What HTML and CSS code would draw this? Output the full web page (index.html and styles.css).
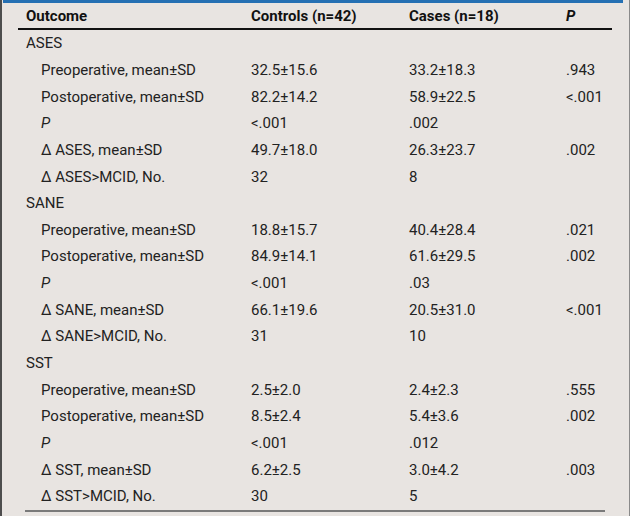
FILE: index.html
```html
<!DOCTYPE html>
<html>
<head>
<meta charset="utf-8">
<link rel="stylesheet" href="styles.css">
</head>
<body>
<div class="frame">
  <div class="topbar"></div>
  <table class="data">
    <colgroup>
      <col class="c1"><col class="c2"><col class="c3"><col class="c4">
    </colgroup>
    <thead>
      <tr><th>Outcome</th><th>Controls (n=42)</th><th>Cases (n=18)</th><th><i>P</i></th></tr>
    </thead>
    <tbody>
      <tr><td class="grp">ASES</td><td></td><td></td><td></td></tr>
      <tr><td class="sub">Preoperative, mean±SD</td><td>32.5±15.6</td><td>33.2±18.3</td><td>.943</td></tr>
      <tr><td class="sub">Postoperative, mean±SD</td><td>82.2±14.2</td><td>58.9±22.5</td><td>&lt;.001</td></tr>
      <tr><td class="sub"><i>P</i></td><td>&lt;.001</td><td>.002</td><td></td></tr>
      <tr><td class="sub">Δ ASES, mean±SD</td><td>49.7±18.0</td><td>26.3±23.7</td><td>.002</td></tr>
      <tr><td class="sub">Δ ASES&gt;MCID, No.</td><td>32</td><td>8</td><td></td></tr>
      <tr><td class="grp">SANE</td><td></td><td></td><td></td></tr>
      <tr><td class="sub">Preoperative, mean±SD</td><td>18.8±15.7</td><td>40.4±28.4</td><td>.021</td></tr>
      <tr><td class="sub">Postoperative, mean±SD</td><td>84.9±14.1</td><td>61.6±29.5</td><td>.002</td></tr>
      <tr><td class="sub"><i>P</i></td><td>&lt;.001</td><td>.03</td><td></td></tr>
      <tr><td class="sub">Δ SANE, mean±SD</td><td>66.1±19.6</td><td>20.5±31.0</td><td>&lt;.001</td></tr>
      <tr><td class="sub">Δ SANE&gt;MCID, No.</td><td>31</td><td>10</td><td></td></tr>
      <tr><td class="grp">SST</td><td></td><td></td><td></td></tr>
      <tr><td class="sub">Preoperative, mean±SD</td><td>2.5±2.0</td><td>2.4±2.3</td><td>.555</td></tr>
      <tr><td class="sub">Postoperative, mean±SD</td><td>8.5±2.4</td><td>5.4±3.6</td><td>.002</td></tr>
      <tr><td class="sub"><i>P</i></td><td>&lt;.001</td><td>.012</td><td></td></tr>
      <tr><td class="sub">Δ SST, mean±SD</td><td>6.2±2.5</td><td>3.0±4.2</td><td>.003</td></tr>
      <tr><td class="sub">Δ SST&gt;MCID, No.</td><td>30</td><td>5</td><td></td></tr>
    </tbody>
  </table>
  <div class="bottomrule"></div>
</div>
</body>
</html>
```

FILE: styles.css
```css
html, body {
  margin: 0;
  padding: 0;
  background: #e8e4e1;
}
body {
  font-family: Roboto, "Liberation Sans", sans-serif;
  font-size: 15px;
  color: #222;
}
.frame {
  box-sizing: border-box;
  width: 630px;
  height: 516px;
  border-left: 2px solid #4d4d4d;
  border-right: 1px solid #8a8a8a;
  padding: 0 6px 0 1px;
  overflow: hidden;
}
.topbar {
  height: 3px;
  background: #2570b3;
}
.data {
  margin-left: 15px;
  width: 594px;
  border-collapse: collapse;
  table-layout: fixed;
}
.c1 { width: 225px; }
.c2 { width: 158px; }
.c3 { width: 157px; }
.c4 { width: 54px; }
.data th {
  text-align: left;
  font-weight: bold;
  color: #111;
  height: 25px;
  padding: 0 0 0 8px;
  border-bottom: 2px solid #111;
  vertical-align: middle;
}
.data th i {
  font-style: italic;
}
.data td {
  height: 26.65px;
  padding: 0 0 0 8px;
  vertical-align: middle;
  white-space: nowrap;
}
.data td.sub {
  padding-left: 23px;
}
.bottomrule {
  margin: 0 0 0 22px;
  width: 580px;
  height: 2px;
  background: #7a7a7a;
}
```
